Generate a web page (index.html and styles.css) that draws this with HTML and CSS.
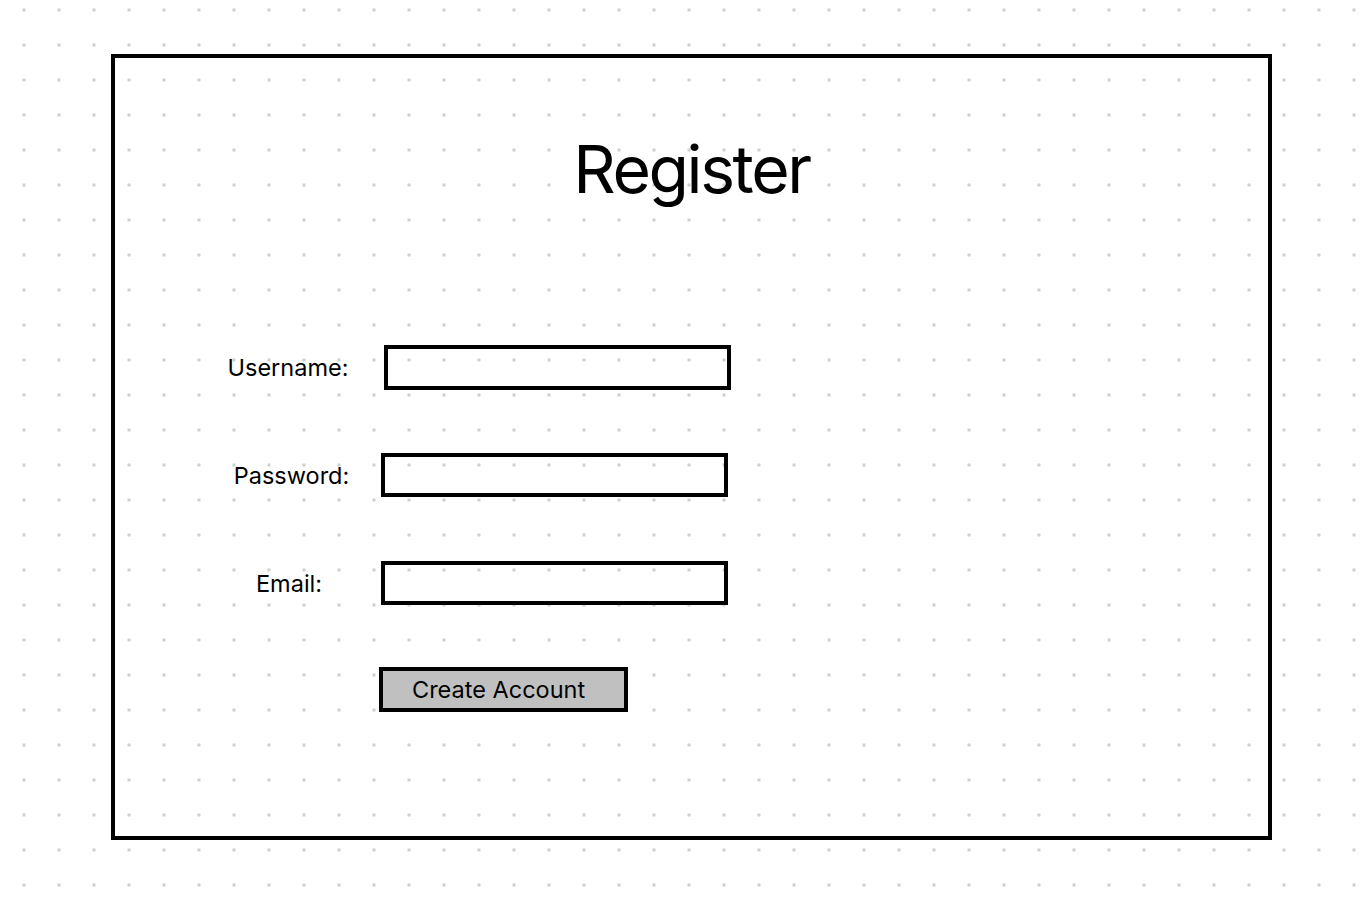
FILE: index.html
```html
<!DOCTYPE html>
<html lang="en">
<head>
<meta charset="utf-8">
<title>Register</title>
<link rel="stylesheet" href="styles.css">
</head>
<body>
<div class="frame">
  <h1 class="title">Register</h1>
  <form class="form">
    <div class="row row-user">
      <label class="label" for="u">Username:</label>
      <input class="field" id="u" type="text">
    </div>
    <div class="row row-pass">
      <label class="label" for="p">Password:</label>
      <input class="field" id="p" type="password">
    </div>
    <div class="row row-email">
      <label class="label" for="e">Email:</label>
      <input class="field" id="e" type="email">
    </div>
    <div class="row row-btn">
      <button class="btn" type="button">Create Account</button>
    </div>
  </form>
</div>
</body>
</html>
```

FILE: styles.css
```css
html, body {
  margin: 0;
  padding: 0;
}
body {
  width: 1360px;
  height: 898px;
  overflow: hidden;
  background-color: #ffffff;
  background-image: radial-gradient(circle, #cfcfcf 1.4px, transparent 1.9px);
  background-size: 35px 35px;
  background-position: 6.5px -7.5px;
  font-family: Inter, "Noto Sans", sans-serif;
  color: #000;
}
.frame {
  box-sizing: border-box;
  margin: 54px 0 0 111px;
  width: 1161px;
  height: 786px;
  border: 4px solid #000;
}
.title {
  margin: 76px 0 0;
  text-align: center;
  font-weight: 400;
  font-size: 66px;
  letter-spacing: -2.4px;
  line-height: 70px;
}
.form {
  margin-top: 141px;
  display: flex;
  flex-direction: column;
  gap: 64px;
}
.row {
  display: flex;
  align-items: center;
  height: 44px;
}
.label {
  width: 130px;
  text-align: center;
  font-size: 23.5px;
}
.field {
  box-sizing: border-box;
  width: 347px;
  height: 44px;
  border: 4px solid #000;
  background: transparent;
  margin: 0;
  padding: 0;
  outline: none;
  border-radius: 0;
}
.row-user { padding-left: 108px; height: 45px; }
.row-user .field { margin-left: 31px; height: 45px; }
.row-pass { padding-left: 111.5px; margin-top: -1px; }
.row-pass .field { margin-left: 24.5px; }
.row-email { padding-left: 109px; }
.row-email .field { margin-left: 27px; }
.row-btn { padding-left: 264px; height: 45px; margin-top: -2px; }
.btn {
  box-sizing: border-box;
  width: 249px;
  height: 45px;
  border: 4px solid #000;
  background: #c0c0c0;
  border-radius: 0;
  font-family: Inter, "Noto Sans", sans-serif;
  font-size: 23.5px;
  color: #000;
  text-align: left;
  padding: 0 0 0 29px;
  margin: 0;
}
```
